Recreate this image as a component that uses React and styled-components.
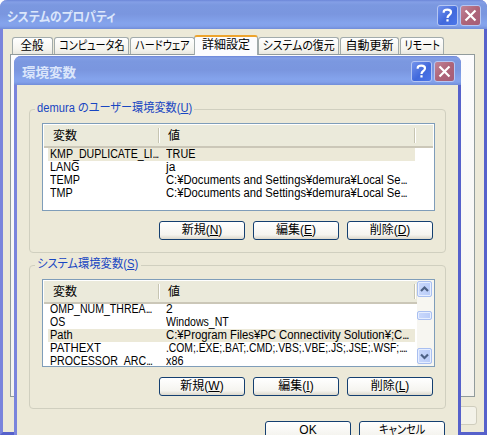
import React from "react";
import styled, { createGlobalStyle, css } from "styled-components";

const Global = createGlobalStyle`
  * { box-sizing: border-box; }
  html, body { margin: 0; padding: 0; overflow: hidden; background: #fff; }
  body { font: 12px/13px "Liberation Sans", "Noto Sans CJK JP", sans-serif; color: #000; }
  u { text-underline-offset: 1px; text-decoration-thickness: 1px; }
`;

const frame = css`
  border: 3px solid #7480d8;
  border-top: 0;
  border-left-color: #7a84dc;
  border-right-color: #5661cb;
  border-radius: 7px 7px 0 0;
  background: #ece9d8;
`;

const OuterWindow = styled.div`
  ${frame}
  position: relative;
  width: 487px;
  height: 435px;
  border-bottom-color: #5661cb;
`;

const InnerWindow = styled.div`
  ${frame}
  position: absolute;
  left: 11px;
  top: 56px;
  width: 447px;
  height: 390px;
`;

const TitleBar = styled.div`
  display: flex;
  align-items: center;
  height: 29px;
  margin: 0 -3px;
  padding: 2px 6px 0 ${(p) => p.$indent}px;
  border-radius: 7px 7px 0 0;
  background: linear-gradient(#6c86d8 0, #849fe6 2px, #7b98e0 5px, #7a96df 14px, #84a3ec 23px, #83a1ea 26px, #718dd9 29px);
`;

const TitleText = styled.div`
  flex: 1;
  font: bold 13px/20px "Noto Sans CJK JP", sans-serif;
  font-feature-settings: "palt";
  color: #dbe6fb;
  white-space: nowrap;
`;

const Condensed = styled.span`
  display: inline-block;
  flex: none;
  white-space: nowrap;
  transform: scaleX(${(p) => p.$x});
  transform-origin: ${(p) => (p.$center ? "center" : "left")};
`;

const TitleButton = styled.div`
  width: 21px;
  height: 21px;
  margin-left: 2px;
  border: 1px solid #b5c6f3;
  border-radius: 3px;
  background: ${(p) => (p.$close ? "linear-gradient(135deg, #c18497, #ae6478 50%, #a65d78)" : "linear-gradient(135deg, #7393ec, #4169dc 55%, #4c76ea)")};
  svg { display: block; }
`;

const Tabs = styled.div`
  display: flex;
  align-items: flex-end;
  height: 25px;
  padding-left: 9px;
`;

const Tab = styled.div`
  display: flex;
  justify-content: center;
  height: 17px;
  width: ${(p) => p.$width}px;
  margin-right: ${(p) => p.$gap}px;
  border: 1px solid #a2abab;
  border-bottom: 0;
  border-radius: 3px 3px 0 0;
  background: linear-gradient(#fff, #f5f4ee 70%, #e9e7df);
  line-height: 17px;
  font-feature-settings: "palt";
  ${(p) => p.$active && css`
    height: 20px;
    margin-bottom: -1px;
    border-top: 2px solid #eda42d;
    background: #fcfcfe;
    z-index: 1;
  `}
`;

const TabPage = styled.div`
  width: 465px;
  height: 343px;
  margin-left: 7px;
  border: 1px solid #919b9c;
  background: linear-gradient(#fcfcfe, #f4f3ee);
`;

const DisabledButton = styled.div`
  width: 75px;
  height: 19px;
  margin: 9px 7px 0 auto;
  border: 1px solid #cfcdbd;
  border-radius: 3px;
  background: #f3f2e9;
`;

const Body = styled.div`
  padding: 24px 12px 0;
`;

const Group = styled.section`
  height: 144px;
  margin-bottom: 12px;
  padding: 0 12px;
  border: 1px solid #d0cfbf;
  border-radius: 4px;
`;

const GroupTitle = styled.div`
  width: ${(p) => p.$width}px;
  height: 13px;
  margin: -8px 0 8px -7px;
  padding: 0 2px;
  background: #ece9d8;
  color: #1846c2;
  white-space: nowrap;
  font-feature-settings: "palt";
`;

const List = styled.div`
  display: flex;
  width: 393px;
  height: 88px;
  border: 1px solid #7f9db9;
  background: #fff;
`;

const Table = styled.div`
  flex: 1;
  min-width: 0;
  padding: 1px 0 1px 1px;
  display: flex;
  flex-direction: column;
`;

const Header = styled.div`
  display: flex;
  flex: none;
  height: 23px;
  margin-right: ${(p) => (p.$scroll ? 0 : 1)}px;
  padding: 3px 0;
  border-bottom: 2px solid #cbc7b8;
  background: #ebeadb;
`;

const HeaderCell = styled.div`
  width: ${(p) => p.$width}px;
  padding-left: 9px;
  border-right: 1px solid #c7c5b2;
  box-shadow: 1px 0 #fff;
  line-height: 17px;
`;

const Rows = styled.div`
  flex: 1;
  min-height: 0;
  overflow: hidden;
`;

const Row = styled.div`
  display: flex;
  height: 13px;
  width: 367px;
  margin-left: 4px;
  background: ${(p) => (p.$selected ? "#ece9d8" : "transparent")};
  line-height: 13px;
  &:first-child { margin-top: ${(p) => (p.$scroll ? -1 : 0)}px; }
`;

const Cell = styled.div`
  width: ${(p) => p.$width}px;
  padding-left: 2px;
`;

const Dots = styled.span`
  letter-spacing: -1.2px;
`;

const ScrollBar = styled.div`
  display: flex;
  flex-direction: column;
  width: 17px;
  padding: 1px 1px 1px 0;
  background: #f7f6f1;
`;

const ScrollPart = styled.div`
  width: 15px;
  height: ${(p) => p.$height}px;
  margin-top: ${(p) => p.$top || 0}px;
  border: 1px solid #a9bff0;
  border-radius: 2px;
  box-shadow: inset 0 0 0 1px #e6eeff;
  background: linear-gradient(90deg, #c9d8fc, #b9ccf8);
  svg { display: block; }
`;

const Buttons = styled.div`
  display: flex;
  justify-content: flex-end;
  gap: 8px;
  margin: ${(p) => p.$top}px ${(p) => p.$right}px 0 0;
`;

const Button = styled.div`
  display: flex;
  justify-content: center;
  width: 86px;
  height: 19px;
  border: 1px solid #143f70;
  border-radius: 3px;
  background: linear-gradient(#fff, #f5f4ef 75%, #dcd8cc);
  line-height: 17px;
  white-space: nowrap;
  font-feature-settings: "palt";
`;

const CaptionButtons = () => (
  <>
    <TitleButton>
      <svg width="19" height="19" viewBox="0 0 19 19" fill="none" stroke="#fff" strokeWidth="2.2">
        <path d="M5.7 6.7V6Q5.7 3.7 9.4 3.7Q13 3.7 13 6.3Q13 7.9 11.3 9Q9.5 10.2 9.5 12M9.5 13.3V15.5" />
      </svg>
    </TitleButton>
    <TitleButton $close>
      <svg width="19" height="19" viewBox="0 0 19 19" stroke="#fff" strokeWidth="2.2" strokeLinecap="square">
        <path d="M5.3 5.3L13.7 13.7M13.7 5.3L5.3 13.7" />
      </svg>
    </TitleButton>
  </>
);

const Scroll = () => (
  <ScrollBar>
    <ScrollPart $height={16}>
      <svg width="13" height="14" fill="none" stroke="#4d6185" strokeWidth="2.2"><path d="M3 9L6.5 5.5L10 9" /></svg>
    </ScrollPart>
    <ScrollPart $height={9} $top={14} />
    <ScrollPart $height={16} $top={28}>
      <svg width="13" height="14" fill="none" stroke="#4d6185" strokeWidth="2.2"><path d="M3 5.5L6.5 9L10 5.5" /></svg>
    </ScrollPart>
  </ScrollBar>
);

const userVars = [
  { name: "KMP_DUPLICATE_LI", more: "...", nx: 0.885, value: "TRUE", vx: 0.9, selected: true },
  { name: "LANG", nx: 0.9, value: "ja" },
  { name: "TEMP", nx: 0.9, value: "C:¥Documents and Settings¥demura¥Local Se", rest: "...", vx: 0.937 },
  { name: "TMP", nx: 0.9, value: "C:¥Documents and Settings¥demura¥Local Se", rest: "...", vx: 0.937 },
];

const systemVars = [
  { name: "OMP_NUM_THREA", more: "...", nx: 0.88, value: "2" },
  { name: "OS", nx: 0.88, value: "Windows_NT", vx: 0.88 },
  { name: "Path", nx: 0.92, value: "C:¥Program Files¥PC Connectivity Solution¥;C", rest: "...", vx: 0.942, selected: true },
  { name: "PATHEXT", nx: 0.95, value: ".COM;.EXE;.BAT;.CMD;.VBS;.VBE;.JS;.JSE;.WSF;", rest: "....", vx: 0.86 },
  { name: "PROCESSOR_ARC", more: "...", nx: 0.885, value: "x86", vx: 0.9 },
];

const VariableList = ({ items, scroll }) => (
  <List>
    <Table>
      <Header $scroll={scroll}>
        <HeaderCell $width={115}>変数</HeaderCell>
        <HeaderCell $width={256}>値</HeaderCell>
      </Header>
      <Rows>
        {items.map((v) => (
          <Row key={v.name} $selected={v.selected} $scroll={scroll}>
            <Cell $width={116}><Condensed $x={v.nx || 1}>{v.name}<Dots>{v.more}</Dots></Condensed></Cell>
            <Cell $width={251}><Condensed $x={v.vx || 1}>{v.value}<Dots>{v.rest}</Dots></Condensed></Cell>
          </Row>
        ))}
      </Rows>
    </Table>
    {scroll && <Scroll />}
  </List>
);

export default function App() {
  return (
    <>
      <Global />
      <OuterWindow>
        <TitleBar $indent={7}>
          <TitleText><Condensed $x={0.9}>システムのプロパティ</Condensed></TitleText>
          <CaptionButtons />
        </TitleBar>
        <Tabs>
          <Tab $width={41} $gap={1}><Condensed $center $x={0.96}>全般</Condensed></Tab>
          <Tab $width={75} $gap={1}><Condensed $center $x={0.84}>コンピュータ名</Condensed></Tab>
          <Tab $width={65} $gap={-1}><Condensed $center $x={0.84}>ハードウェア</Condensed></Tab>
          <Tab $width={64} $gap={0} $active><Condensed $center $x={1}>詳細設定</Condensed></Tab>
          <Tab $width={81} $gap={1}><Condensed $center $x={0.91}>システムの復元</Condensed></Tab>
          <Tab $width={59} $gap={1}><Condensed $center $x={1}>自動更新</Condensed></Tab>
          <Tab $width={44} $gap={0}><Condensed $center $x={0.84}>リモート</Condensed></Tab>
        </Tabs>
        <TabPage />
        <DisabledButton />
        <InnerWindow>
          <TitleBar $indent={8}>
            <TitleText><Condensed $x={1.04}>環境変数</Condensed></TitleText>
            <CaptionButtons />
          </TitleBar>
          <Body>
            <Group>
              <GroupTitle $width={159}><Condensed $x={0.93}>demura のユーザー環境変数(<u>U</u>)</Condensed></GroupTitle>
              <VariableList items={userVars} />
              <Buttons $top={10} $right={0}>
                <Button>新規(<u>N</u>)</Button>
                <Button>編集(<u>E</u>)</Button>
                <Button>削除(<u>D</u>)</Button>
              </Buttons>
            </Group>
            <Group>
              <GroupTitle $width={106}><Condensed $x={0.94}>システム環境変数(<u>S</u>)</Condensed></GroupTitle>
              <VariableList items={systemVars} scroll />
              <Buttons $top={10} $right={0}>
                <Button>新規(<u>W</u>)</Button>
                <Button>編集(<u>I</u>)</Button>
                <Button>削除(<u>L</u>)</Button>
              </Buttons>
            </Group>
            <Buttons $top={0} $right={1}>
              <Button>OK</Button>
              <Button><Condensed $center $x={0.85}>キャンセル</Condensed></Button>
            </Buttons>
          </Body>
        </InnerWindow>
      </OuterWindow>
    </>
  );
}
